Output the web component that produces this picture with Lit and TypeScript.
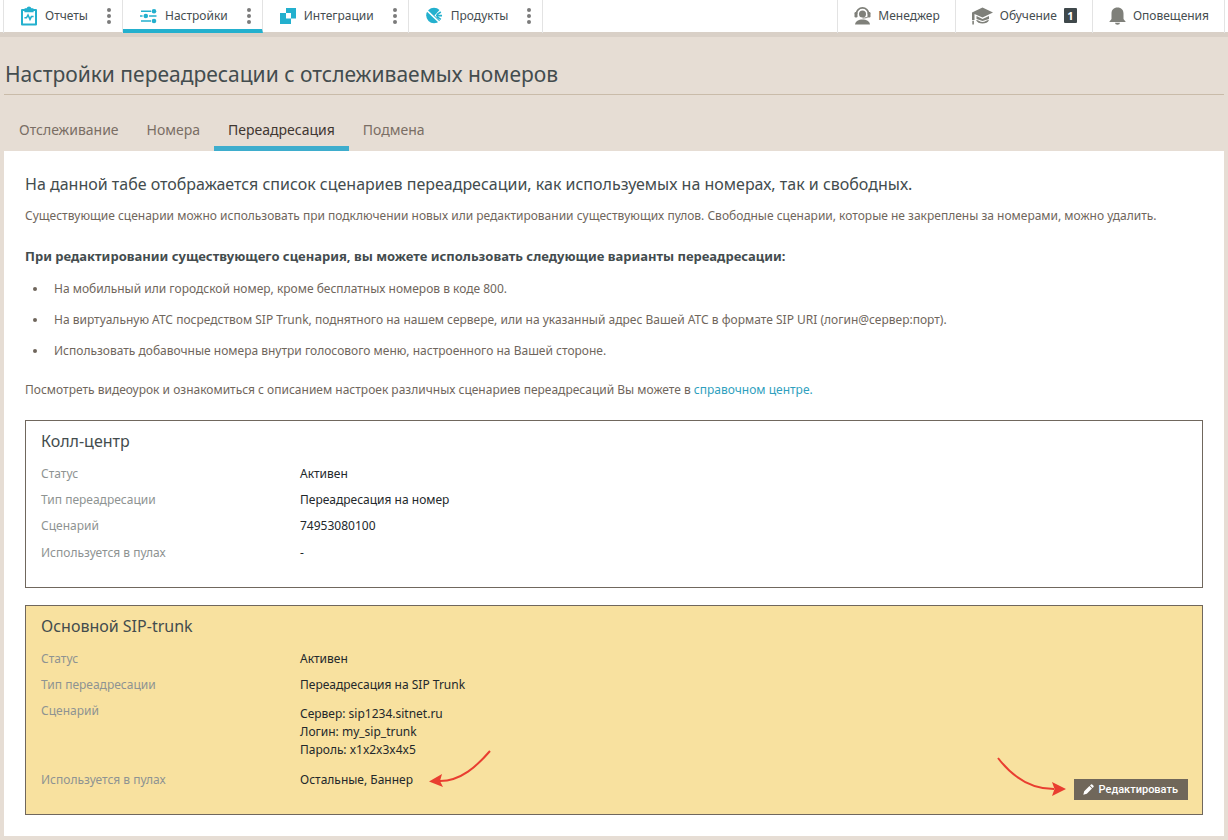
import { LitElement, html, css, svg, nothing } from "lit";
import { customElement, property } from "lit/decorators.js";

type IconName = "report" | "settings" | "integration" | "product" | "manager" | "education" | "bell" | "pencil";

const icons = {
  report: svg`<svg width="16" height="20" viewBox="0 0 16 20" aria-hidden="true"><path fill="currentColor" fill-rule="evenodd" d="M1 3H3.6V2.2H5.6A2.5 2.5 0 0 1 10.4 2.2H12.4V3H15A1 1 0 0 1 16 4V18.500A1 1 0 0 1 15 19.500H1A1 1 0 0 1 0 18.500V4A1 1 0 0 1 1 3ZM3.400 5H2V17.500H14V5H12.600V6.200H3.400Z"/><path fill="none" stroke="currentColor" stroke-width="1.500" d="M3.400 11.800H5.500L7 9L9 13.400L10.400 10.600H12.600"/></svg>`,
  settings: svg`<svg width="17" height="16" viewBox="0 0 17 16" aria-hidden="true"><g stroke="currentColor" stroke-width="1.500" fill="none"><path d="M1 3.200H11M0 8H16.500M1 13H11"/></g><g fill="currentColor"><circle cx="14" cy="3.200" r="2.300"/><circle cx="5.800" cy="8" r="3.300" fill="#fff"/><circle cx="5.800" cy="8" r="2.300"/><circle cx="14" cy="13" r="2.300"/></g></svg>`,
  integration: svg`<svg width="16" height="16" viewBox="0 0 16 16" aria-hidden="true"><path fill="currentColor" fill-rule="evenodd" d="M6 0H16V10.500H11V16H0V5H6ZM6 5V10.500H11V5Z"/></svg>`,
  product: svg`<svg width="17" height="17" viewBox="0 0 17 17" aria-hidden="true"><circle cx="8" cy="8.500" r="7.800" fill="currentColor"/><path fill="#fff" d="M8.500 8.500L14 2.500L17 3V14L14.500 14Z"/><path stroke="#fff" stroke-width="1.700" fill="none" d="M.5 3L13.500 15.500"/><path stroke="currentColor" stroke-width="1.700" fill="none" d="M10.800 7.600L14.800 5M10 8.700H16M10.800 9.800L14.800 12.400"/></svg>`,
  manager: svg`<svg width="17" height="18" viewBox="0 0 17 18" aria-hidden="true"><path fill="none" stroke="currentColor" stroke-width="1.800" d="M2.500 6.500A6 5.600 0 0 1 14.500 6.500"/><g fill="currentColor"><rect x=".5" y="5" width="3" height="5.500" rx="1.200"/><rect x="13.500" y="5" width="3" height="5.500" rx="1.200"/><circle cx="8.500" cy="7" r="3.500"/><path d="M1 17.500C1.500 14 4.500 12.500 8.500 12.500S15.500 14 16 17.500Z"/></g><path d="M8.500 11C11.500 11 13.300 10.700 14.500 9.500" fill="none" stroke="currentColor"/></svg>`,
  education: svg`<svg width="21" height="18" viewBox="0 0 21 18" aria-hidden="true"><g fill="currentColor"><path d="M10.500 .5L21 5.500L10.500 10.500L2.500 6.900V13H0V5.500Z"/><path d="M4.500 9L10.500 12L17 9V12L10.500 14L4.500 12Z"/><path d="M4 13C6.500 13 8 15 10.500 15S14.500 13 17 13C16 15.800 13.500 16.500 10.500 16.500S5 15.500 4 13Z"/><path d="M.3 13.800H1.900V17.500H.3Z"/></g></svg>`,
  bell: svg`<svg width="17" height="18" viewBox="0 0 17 18" aria-hidden="true"><path fill="currentColor" d="M8.500 .5C12.300 .5 14.500 3 14.500 6.500V12L16.800 15H.2L2.500 12V6.500C2.500 3 4.700 .5 8.500 .5ZM6 15.800H11A2.500 2 0 0 1 6 15.800Z"/></svg>`,
  pencil: svg`<svg width="11" height="11" viewBox="0 0 11 11" aria-hidden="true"><path fill="currentColor" d="M.3 10.700L1.200 7.200L6.400 2L9 4.600L3.800 9.800ZM7 1.400L8 .5Q8.600 0 9.200 .5L10.500 1.800Q11 2.400 10.500 3L9.600 4Z"/></svg>`,
};

@customElement("nav-item")
export class NavItem extends LitElement {
  @property() label = "";
  @property() icon: IconName = "report";
  @property({ type: Number }) count = 0;
  @property({ type: Boolean }) active = false;
  @property({ type: Boolean }) menu = false;

  static styles = css`
    :host { display: flex; box-sizing: border-box; height: 33px; border-right: 1px solid #e3e3e3; color: #454d50; }
    :host([active]) { border-bottom: 4px solid #23b0ce; }
    .link { display: flex; align-items: center; height: 31px; padding: 0 15px 0 16px; gap: 7px; color: inherit; text-decoration: none; white-space: nowrap; }
    .icon { display: flex; color: #7f807a; }
    .icon.accent { color: #23b0ce; }
    .badge { display: block; width: 13px; height: 15px; background: #3f484b; color: #fff; font-size: 11px; line-height: 15px; font-weight: 700; text-align: center; border-radius: 1px; }
    .more { display: flex; align-items: center; justify-content: center; width: 16px; height: 31px; margin-right: 5px; padding: 0; border: 0; background: none; color: #7b7b7b; }
    .menu { padding: 0 13px 0 17px; gap: 8px; }
  `;

  render() {
    return html`
      <a class="link ${this.menu ? "menu" : ""}" href="#">
        <span class="icon ${this.menu ? "accent" : ""}">${icons[this.icon]}</span>
        <span>${this.label}</span>
        ${this.count ? html`<span class="badge">${this.count}</span>` : nothing}
      </a>
      ${this.menu
        ? html`<button class="more" type="button" aria-label="Меню: ${this.label}">
            <svg width="4" height="16" viewBox="0 0 4 16" fill="currentColor"><circle cx="2" cy="2" r="2" /><circle cx="2" cy="8" r="2" /><circle cx="2" cy="14" r="2" /></svg>
          </button>`
        : nothing}
    `;
  }
}

interface Scenario {
  title: string;
  status: string;
  type: string;
  details: string[];
  pools: string;
  selected?: boolean;
}

const scenarios: Scenario[] = [
  { title: "Колл-центр", status: "Активен", type: "Переадресация на номер", details: ["74953080100"], pools: "-" },
  {
    title: "Основной SIP-trunk",
    status: "Активен",
    type: "Переадресация на SIP Trunk",
    details: ["Сервер: sip1234.sitnet.ru", "Логин: my_sip_trunk", "Пароль: x1x2x3x4x5"],
    pools: "Остальные, Баннер",
    selected: true,
  },
];

@customElement("scenario-card")
export class ScenarioCard extends LitElement {
  @property({ attribute: false }) scenario!: Scenario;

  static styles = css`
    :host { display: block; }
    .card { display: flex; align-items: flex-end; padding: 8px 14px 14px 15px; border: 1px solid #70675d; background: #fff; }
    .card.selected { background: #f8e19f; }
    .body { flex: 1; padding-bottom: 11px; }
    .title { margin: 0 0 12px; color: #434c4e; font-size: 16px; line-height: 24px; font-weight: 400; }
    .list { display: grid; grid-template-columns: 259px 1fr; row-gap: 8px; margin: 0; line-height: 18px; }
    .term { color: #8e9392; }
    .value { margin: 0; color: #23282b; }
    .value.details { padding-bottom: 1px; }
    .value.lines { padding: 3px 0 4px; }
    .pools, .action { position: relative; }
    .arrow { position: absolute; pointer-events: none; }
    .arrow.left { left: calc(100% + 16px); top: -21px; }
    .arrow.right { right: calc(100% + 8px); bottom: 3px; }
    .edit { display: flex; align-items: center; gap: 5px; height: 21px; padding: 0 10px 0 9px; border: 0; background: #70675a; color: #fff; font: 500 11px/21px Roboto, sans-serif; }
  `;

  render() {
    const s = this.scenario;
    return html`
      <article class="card ${s.selected ? "selected" : ""}">
        <div class="body">
          <h3 class="title">${s.title}</h3>
          <dl class="list">
            <dt class="term">Статус</dt>
            <dd class="value">${s.status}</dd>
            <dt class="term">Тип переадресации</dt>
            <dd class="value">${s.type}</dd>
            <dt class="term">Сценарий</dt>
            <dd class="value ${s.details.length > 1 ? "lines" : "details"}">${s.details.map((d) => html`<div>${d}</div>`)}</dd>
            <dt class="term">Используется в пулах</dt>
            <dd class="value">
              <span class="pools">${s.pools}${s.selected
                ? html`<svg class="arrow left" width="62" height="40" viewBox="0 0 62 40" aria-hidden="true"><path d="M61 1C48 16 32 31 11 31" fill="none" stroke="#e93e30" stroke-width="2" /><path d="M0 31.500L13 24L11 31L14 37Z" fill="#e93e30" /></svg>`
                : nothing}</span>
            </dd>
          </dl>
        </div>
        ${s.selected
          ? html`<div class="action">
              <svg class="arrow right" width="69" height="40" viewBox="0 0 69 40" aria-hidden="true"><path d="M1 1C14 18 32 32 57 32" fill="none" stroke="#e93e30" stroke-width="2" /><path d="M69 32L55 25L57.500 32L55 39Z" fill="#e93e30" /></svg>
              <button class="edit" type="button">${icons.pencil}<span>Редактировать</span></button>
            </div>`
          : nothing}
      </article>
    `;
  }
}

@customElement("app-root")
export class AppRoot extends LitElement {
  static styles = css`
    :host { display: block; box-sizing: border-box; min-height: 100vh; padding-bottom: 4px; background: #e6ddd4; color: #6f665c; font-family: "Noto Sans", sans-serif; font-size: 12px; line-height: 18px; }
    .nav { display: flex; box-sizing: border-box; height: 37px; padding: 0 3px; border-bottom: 5px solid #d9d0c7; background: #fff; }
    .group { display: flex; height: 33px; border-left: 1px solid #e3e3e3; }
    .group.end { margin-left: auto; }
    .page { margin: 0 4px; }
    .heading { margin: 0; padding: 23px 1px 6px; border-bottom: 1px solid #c9bba9; color: #434c4e; font-size: 21px; line-height: 28px; font-weight: 400; }
    .tabs { display: flex; padding-left: 1px; font-size: 14px; line-height: 20px; }
    .tab { padding: 25px 14px 6px; border-bottom: 5px solid transparent; color: #7a6e64; text-decoration: none; }
    .tab.current { border-color: #3eadcd; color: #3f3631; }
    .panel { padding: 21px; background: #fff; }
    .lead { margin: 0; color: #434c4e; font-size: 16px; line-height: 24px; font-weight: 400; }
    .text { margin: 11px 0 0; }
    .subhead { margin: 22px 0 15px; color: #434c4e; font-size: 13px; line-height: 18px; font-weight: 700; }
    .options { display: grid; gap: 13px; margin: 0; padding-left: 8px; list-style: none; }
    .option { display: flex; align-items: center; gap: 17px; }
    .option::before { content: ""; width: 4px; height: 4px; border-radius: 50%; background: #6f665c; }
    .help { margin: 21px 0; }
    .link { color: #2f9fbe; text-decoration: none; }
    .cards { display: grid; gap: 17px; }
  `;

  render() {
    return html`
      <nav class="nav">
        <div class="group">
          <nav-item label="Отчеты" icon="report" menu></nav-item>
          <nav-item label="Настройки" icon="settings" menu active></nav-item>
          <nav-item label="Интеграции" icon="integration" menu></nav-item>
          <nav-item label="Продукты" icon="product" menu></nav-item>
        </div>
        <div class="group end">
          <nav-item label="Менеджер" icon="manager"></nav-item>
          <nav-item label="Обучение" icon="education" count="1"></nav-item>
          <nav-item label="Оповещения" icon="bell"></nav-item>
        </div>
      </nav>
      <main class="page">
        <h1 class="heading">Настройки переадресации с отслеживаемых номеров</h1>
        <nav class="tabs">
          <a class="tab" href="#">Отслеживание</a>
          <a class="tab" href="#">Номера</a>
          <a class="tab current" href="#" aria-current="page">Переадресация</a>
          <a class="tab" href="#">Подмена</a>
        </nav>
        <section class="panel">
          <h2 class="lead">На данной табе отображается список сценариев переадресации, как используемых на номерах, так и свободных.</h2>
          <p class="text">Существующие сценарии можно использовать при подключении новых или редактировании существующих пулов. Свободные сценарии, которые не закреплены за номерами, можно удалить.</p>
          <h3 class="subhead">При редактировании существующего сценария, вы можете использовать следующие варианты переадресации:</h3>
          <ul class="options">
            <li class="option">На мобильный или городской номер, кроме бесплатных номеров в коде 800.</li>
            <li class="option">На виртуальную АТС посредством SIP Trunk, поднятного на нашем сервере, или на указанный адрес Вашей АТС в формате SIP URI (логин@сервер:порт).</li>
            <li class="option">Использовать добавочные номера внутри голосового меню, настроенного на Вашей стороне.</li>
          </ul>
          <p class="help">Посмотреть видеоурок и ознакомиться с описанием настроек различных сценариев переадресаций Вы можете в <a class="link" href="#">справочном центре.</a></p>
          <div class="cards">${scenarios.map((s) => html`<scenario-card .scenario=${s}></scenario-card>`)}</div>
        </section>
      </main>
    `;
  }
}
